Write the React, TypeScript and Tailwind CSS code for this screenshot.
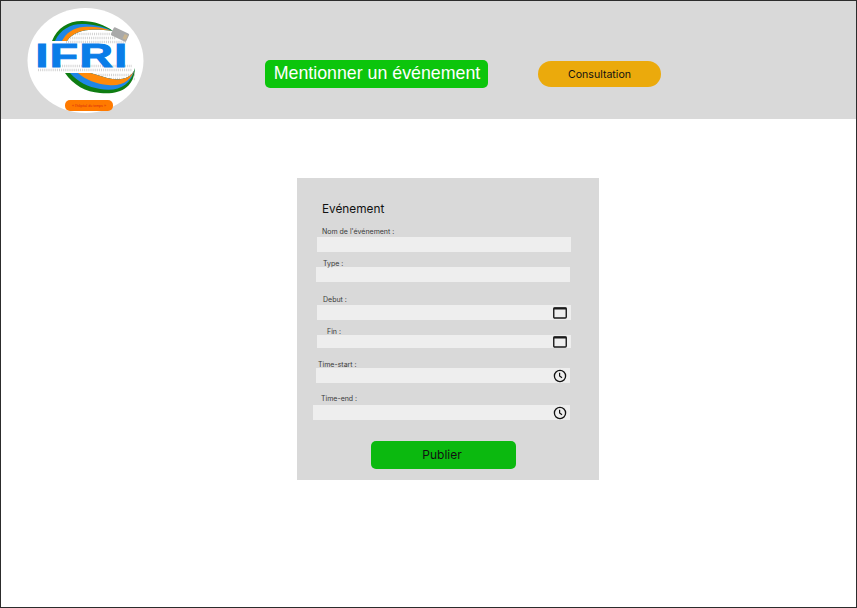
import type { ReactNode } from 'react';

function CalendarIcon() {
  return (
    <svg width="14" height="12" viewBox="0 0 14 12" className="shrink-0 mr-px">
      <rect x="0.75" y="1" width="12.5" height="10" rx="1" fill="none" stroke="#1a1a1a" strokeWidth="1.4" />
      <rect x="0.5" y="0.5" width="13" height="2" fill="#1a1a1a" />
    </svg>
  );
}

function ClockIcon() {
  return (
    <svg width="14" height="14" viewBox="0 0 14 14" className="shrink-0">
      <circle cx="7" cy="7" r="5.6" fill="none" stroke="#111111" strokeWidth="1.3" />
      <path d="M6.6 3.8V7L9 8.8" fill="none" stroke="#111111" strokeWidth="1.2" />
    </svg>
  );
}

// the logo's binary texture, too small to read: dashed rows
const BINARY_ROWS = [
  { x1: 73, x2: 110, y: 34 },
  { x1: 68, x2: 116, y: 38 },
  { x1: 66, x2: 126, y: 42 },
  { x1: 60, x2: 132, y: 66 },
  { x1: 38, x2: 132, y: 70 },
  { x1: 90, x2: 135, y: 75 },
  { x1: 96, x2: 135, y: 79 },
];

function Logo() {
  return (
    <svg width="117" height="105" viewBox="27 8 117 105" className="shrink-0">
      <ellipse cx="85.5" cy="60.5" rx="58" ry="52.5" fill="#ffffff" />
      {BINARY_ROWS.map((r) => (
        <line key={r.y} x1={r.x1} x2={r.x2} y1={r.y} y2={r.y} stroke="#d2d2d2" strokeWidth="2.4" strokeDasharray="1 1.1" />
      ))}
      {/* top swoosh */}
      <path d="M52 41C57 28 68 21 82 21C94 21 105 25 113 31C100 29 90 29 82 31C75 33 70 36 67 41Z" fill="#0f7d12" />
      <path d="M55 41C60 30 70 24 82 24C92 24 102 26 113 31C100 29 90 29 82 31C75 33 70 36 67 41Z" fill="#1f86e6" />
      <path d="M62 41C66 33 73 28 83 27C92 26 102 27 113 31C100 29 90 29 82 31C75 33 70 36 67 41Z" fill="#ff8a0a" />
      {/* bottom swoosh */}
      <path d="M65 73C73 85 86 92 100 93C120 95 134 88 135 68C132 80 118 81 107 78C100 76 95 74 90 73Z" fill="#0f7d12" />
      <path d="M70 73C78 82 88 87 100 89C118 92 131 86 135 68C132 80 118 81 107 78C100 76 95 74 90 73Z" fill="#1f86e6" />
      <path d="M78 73C86 80 96 84 108 85C122 87 132 80 135 68C132 80 118 81 107 78C100 76 95 74 90 73Z" fill="#ff8a0a" />
      <text
        x="35.5"
        y="67.4"
        fontSize="32.5"
        fontWeight="700"
        letterSpacing="1"
        fill="#0a7de8"
        stroke="#0a7de8"
        strokeWidth="1"
        textLength="93"
        lengthAdjust="spacingAndGlyphs"
        fontFamily="'Liberation Sans', sans-serif"
      >
        IFRI
      </text>
      {/* network plug */}
      <g transform="rotate(25 120 34.5)">
        <rect x="111.5" y="30" width="17" height="9" rx="1.5" fill="#a9a9a9" />
        <rect x="124" y="32" width="3.5" height="5" fill="#c9b48f" />
      </g>
      <rect x="65" y="100" width="48" height="11" rx="5" fill="#ff7a00" />
      <text x="89" y="107" fontSize="3.6" fill="#d92a10" textAnchor="middle" fontFamily="'Liberation Sans', sans-serif">
        « l'hôpital du temps »
      </text>
    </svg>
  );
}

function Field({
  label,
  rowClass,
  labelClass,
  inputClass,
  icon,
}: {
  label: string;
  rowClass: string;
  labelClass: string;
  inputClass: string;
  icon?: ReactNode;
}) {
  return (
    <div className={rowClass}>
      <div className={`h-[9px] text-[7px] leading-[9px] whitespace-nowrap text-[#3a3a3a] ${labelClass}`}>{label}</div>
      <div className={`flex items-center justify-end pr-[3px] bg-[#eeeeee] ${inputClass}`}>{icon}</div>
    </div>
  );
}

export default function App() {
  return (
    <div className="w-[857px] h-[608px] overflow-hidden border border-[#2c2c2c] bg-white font-['Inter',sans-serif]">
      <header className="flex items-start h-[118px] pl-[26px] bg-[#d9d9d9]">
        <div className="mt-[7px]">
          <Logo />
        </div>
        <div className="ml-[121px] mt-[59px] flex items-center justify-center w-[223px] h-[28px] pb-[2px] pl-[1px] rounded-[5px] bg-[#0cc50c] text-white text-[17.8px] font-['Liberation_Sans',sans-serif]">
          Mentionner un événement
        </div>
        <div className="ml-[50px] mt-[60px] flex items-center justify-center w-[123px] h-[26px] pt-[1px] rounded-[13px] bg-[#ebaa0c] text-[#111111] text-[10.6px]">
          Consultation
        </div>
      </header>

      <main className="pt-[59px] pl-[296px]">
        <section className="flex flex-col w-[302px] h-[302px] pt-[23px] bg-[#d9d9d9]">
          <h1 className="ml-[25px] h-[15px] pt-px text-[11.8px] leading-[15px] text-[#111111]">Evénement</h1>

          <Field
            label="Nom de l'événement :"
            rowClass="mt-[11px]"
            labelClass="ml-[25px] mb-px"
            inputClass="ml-[20px] w-[254px] h-[15px]"
          />
          <Field label="Type :" rowClass="mt-[6px]" labelClass="ml-[26px] pt-px" inputClass="ml-[19px] w-[254px] h-[15px]" />
          <Field
            label="Debut :"
            rowClass="mt-[13px]"
            labelClass="ml-[26px] mb-px"
            inputClass="ml-[20px] w-[254px] h-[15px]"
            icon={<CalendarIcon />}
          />
          <Field
            label="Fin :"
            rowClass="mt-[6px]"
            labelClass="ml-[30px] pt-px"
            inputClass="ml-[20px] w-[254px] h-[13px]"
            icon={<CalendarIcon />}
          />
          <Field
            label="Time-start :"
            rowClass="mt-[11px]"
            labelClass="ml-[21px] pt-px"
            inputClass="ml-[19px] w-[254px] h-[15px]"
            icon={<ClockIcon />}
          />
          <Field
            label="Time-end :"
            rowClass="mt-[10px]"
            labelClass="ml-[24px] mb-[3px] pt-px"
            inputClass="ml-[16px] w-[257px] h-[15px]"
            icon={<ClockIcon />}
          />

          <button className="ml-[74px] mt-[21px] w-[145px] h-[28px] pr-[3px] rounded-[5px] bg-[#0bb90f] text-[12px] text-[#111111]">
            Publier
          </button>
        </section>
      </main>
    </div>
  );
}
